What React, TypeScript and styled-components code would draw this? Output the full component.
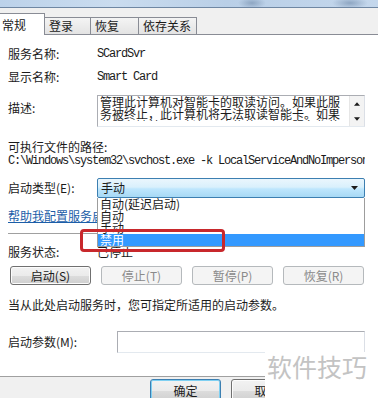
import React from 'react';
import styled, { createGlobalStyle } from 'styled-components';

const Global = createGlobalStyle`
  html, body { margin: 0; padding: 0; }
  body {
    width: 378px; height: 398px; overflow: hidden;
    background: #f0f0f0;
    font-family: "Noto Sans CJK SC", "Noto Sans", sans-serif;
    font-size: 12px; color: #1b1b1b;
  }
`;

const Dialog = styled.div`
  position: relative;
  width: 378px; height: 398px; overflow: hidden;
  display: flex; flex-direction: column;
  background: #f0f0f0;
`;

const TitleStrip = styled.div`
  height: 7px; flex: none;
  background:
    radial-gradient(ellipse 14px 6px at 252px 3px, #8ea6c2 0%, rgba(142,166,194,0) 100%),
    radial-gradient(ellipse 18px 6px at 350px 3px, #8ea6c2 0%, rgba(142,166,194,0) 100%),
    linear-gradient(90deg, #bcd2ea 0%, #cadcef 30%, #b9cfe7 60%, #c4d7ec 100%);
  border-bottom: 1px solid #6f87a3;
`;

const TabBar = styled.div`
  height: 26px; flex: none;
  display: flex; align-items: flex-end;
  border-bottom: 1px solid #898c95;
`;

const Tab = styled.div<{ $active?: boolean; $w: number }>`
  box-sizing: border-box;
  width: ${p => p.$w}px;
  height: ${p => (p.$active ? 22 : 17)}px;
  margin-left: ${p => (p.$active ? -2 : 0)}px;
  margin-bottom: ${p => (p.$active ? -1 : 0)}px;
  background: ${p => (p.$active ? '#ffffff' : 'linear-gradient(#f4f4f4, #e3e3e3)')};
  border-top: 1px solid #898c95;
  border-right: 1px solid #898c95;
  border-left: ${p => (p.$active ? '1px solid #898c95' : 'none')};
  padding: ${p => (p.$active ? '4px 0 0 3px' : '1px 0 0 4px')};
  line-height: 14px;
  font-size: 12px;
  color: #1b1b1b;
  position: relative;
  z-index: ${p => (p.$active ? 1 : 0)};
`;

const Panel = styled.div`
  position: relative;
  flex: none;
  height: 341px;
  background: #ffffff;
  border-bottom: 1px solid #a0a0a0;
  display: flex; flex-direction: column;
`;

const Row = styled.div<{ $mt: number; $label?: number; $h?: number }>`
  display: grid;
  grid-template-columns: ${p => p.$label ?? 89}px 1fr;
  align-items: center;
  margin-top: ${p => p.$mt}px;
  padding: 0 13px 0 8px;
  height: ${p => p.$h ?? 16}px;
`;

const Label = styled.div<{ $top?: number }>`
  line-height: 16px;
  white-space: nowrap;
  align-self: ${p => (p.$top !== undefined ? 'start' : 'center')};
  margin-top: ${p => p.$top ?? 0}px;
`;

const Mono = styled.div`
  font-family: "Liberation Mono", "DejaVu Sans Mono", monospace;
  font-size: 12px;
  letter-spacing: -1.2px;
  line-height: 14px;
  white-space: nowrap;
`;

const TextLine = styled.div<{ $mt: number }>`
  margin-top: ${p => p.$mt}px;
  padding: 0 13px 0 8px;
  line-height: 16px;
  white-space: nowrap;
`;

const PathLine = styled(Mono)`
  margin: -1px 13px 0 8px;
  overflow: hidden;
`;

const DescBox = styled.div`
  box-sizing: border-box;
  height: 32px;
  border: 1px solid #abadb3;
  border-right-color: #dbdfe6;
  border-bottom-color: #e3e9ef;
  display: flex;
`;

const DescText = styled.div`
  flex: 1;
  height: 25px;
  padding: 0 0 0 2px;
  line-height: 12px;
  overflow: hidden;
  word-break: break-all;
`;

const ScrollBar = styled.div`
  width: 14px;
  background: #f3f3f3;
  border-left: 1px solid #e6e6e6;
  display: flex; flex-direction: column; align-items: center; justify-content: space-between;
  padding: 6px 0 5px;
`;

const ComboWrap = styled.div`
  position: relative;
  height: 20px;
`;

const Combo = styled.div`
  box-sizing: border-box;
  height: 20px;
  border: 1px solid #3c7fb1;
  border-radius: 2px;
  background: linear-gradient(#eaf6fd 0%, #d9f0fc 45%, #bee6fd 55%, #a7d9f5 100%);
  display: flex; align-items: center; justify-content: space-between;
  padding: 0 6px 0 3px;
  line-height: 16px;
`;

const DropList = styled.div`
  position: absolute;
  left: 0; top: 100%;
  box-sizing: border-box;
  width: 268px;
  height: 49px;
  background: #ffffff;
  border: 1px solid #9d9d9d;
  border-top: none;
  z-index: 2;
`;

const Item = styled.div<{ $sel?: boolean }>`
  height: 12px;
  line-height: 12px;
  padding-left: 2px;
  background: ${p => (p.$sel ? '#3399ff' : 'transparent')};
  color: ${p => (p.$sel ? '#ffffff' : '#1b1b1b')};
  white-space: nowrap;
`;

const Link = styled.a`
  color: #1c5ea8;
  text-decoration: underline;
`;

const Separator = styled.div<{ $mt: number }>`
  margin: ${p => p.$mt}px 13px 0 8px;
  height: 1px;
  background: #a0a0a0;
`;

const ButtonRow = styled.div<{ $mt: number }>`
  margin-top: ${p => p.$mt}px;
  padding: 0 14px 0 10px;
  display: flex;
  justify-content: space-between;
`;

const Button = styled.div<{ $disabled?: boolean; $w?: number; $default?: boolean }>`
  box-sizing: border-box;
  width: ${p => p.$w ?? 81}px;
  height: ${p => (p.$default !== undefined ? 23 : 19)}px;
  border: 1px solid ${p => (p.$disabled ? '#b5b9bc' : p.$default ? '#3c7fb1' : '#707070')};
  border-radius: 3px;
  background: ${p => (p.$disabled ? '#f4f4f4' : 'linear-gradient(#f2f2f2 0%, #ebebeb 50%, #dddddd 51%, #cfcfcf 100%)')};
  box-shadow: ${p => (p.$default ? 'inset 0 0 0 1px #7fd0f2' : p.$disabled ? 'none' : 'inset 0 0 0 1px #fcfcfc')};
  color: ${p => (p.$disabled ? '#8a8a8a' : '#1b1b1b')};
  display: flex; align-items: center; justify-content: center;
  line-height: 14px;
  white-space: nowrap;
`;

const InputBox = styled.div`
  box-sizing: border-box;
  height: 22px;
  border: 1px solid #abadb3;
  border-right-color: #dbdfe6;
  border-bottom-color: #e3e9ef;
  background: #fff;
`;

const Highlight = styled.div`
  position: absolute;
  left: 80px; top: 194px;
  width: 145px; height: 23px;
  box-sizing: border-box;
  border: 3px solid #c8282c;
  border-radius: 4px;
  z-index: 3;
`;

const Footer = styled.div`
  flex: 1;
  display: flex;
  gap: 10px;
  padding: 2px 0 0 150px;
`;

const Watermark = styled.div`
  position: absolute;
  right: 0; bottom: 0;
  width: 113px; height: 46px;
  background: #ffffff;
  box-sizing: border-box;
  padding: 2px 0 0 2px;
  font-size: 25px;
  line-height: 25px;
  color: #c3c3c3;
  white-space: nowrap;
  z-index: 4;
`;

const Arrow = ({ up, size = 7 }: { up?: boolean; size?: number }) => (
  <svg width={size} height={4} viewBox="0 0 7 4">
    <polygon points={up ? '0,4 3.5,0 7,4' : '0,0 7,0 3.5,4'} fill="#1b1b1b" />
  </svg>
);

export default function App() {
  return (
    <>
      <Global />
      <Dialog>
        <TitleStrip />
        <TabBar>
          <Tab $active $w={47}>常规</Tab>
          <Tab $w={46}>登录</Tab>
          <Tab $w={48}>恢复</Tab>
          <Tab $w={58}>依存关系</Tab>
        </TabBar>
        <Panel>
          <Row $mt={11}>
            <Label>服务名称:</Label>
            <Mono>SCardSvr</Mono>
          </Row>
          <Row $mt={7}>
            <Label>显示名称:</Label>
            <Mono>Smart Card</Mono>
          </Row>
          <Row $mt={10} $h={32}>
            <Label $top={5}>描述:</Label>
            <DescBox>
              <DescText>
                管理此计算机对智能卡的取读访问。如果此服务被终止，此计算机将无法取读智能卡。如果此服务被禁用，任何明确依赖于它的服务都将无法启动。
              </DescText>
              <ScrollBar>
                <Arrow up size={6} />
                <Arrow size={6} />
              </ScrollBar>
            </DescBox>
          </Row>
          <TextLine $mt={12}>可执行文件的路径:</TextLine>
          <PathLine>C:\Windows\system32\svchost.exe -k LocalServiceAndNoImpersonation</PathLine>
          <Row $mt={10} $h={20}>
            <Label>启动类型(E):</Label>
            <ComboWrap>
              <Combo>
                <span>手动</span>
                <Arrow />
              </Combo>
              <DropList>
                <Item>自动(延迟启动)</Item>
                <Item>自动</Item>
                <Item>手动</Item>
                <Item $sel>禁用</Item>
              </DropList>
            </ComboWrap>
          </Row>
          <TextLine $mt={10}>
            <Link>帮助我配置服务启动选项。</Link>
          </TextLine>
          <Separator $mt={9} />
          <Row $mt={10} $h={14}>
            <Label>服务状态:</Label>
            <Label>已停止</Label>
          </Row>
          <ButtonRow $mt={8}>
            <Button>启动(S)</Button>
            <Button $disabled>停止(T)</Button>
            <Button $disabled>暂停(P)</Button>
            <Button $disabled>恢复(R)</Button>
          </ButtonRow>
          <TextLine $mt={12}>当从此处启动服务时，您可指定所适用的启动参数。</TextLine>
          <Row $mt={18} $h={22} $label={109}>
            <Label>启动参数(M):</Label>
            <InputBox />
          </Row>
          <Highlight />
        </Panel>
        <Footer>
          <Button $w={71} $default>确定</Button>
          <Button $w={71} $default={false}>取消</Button>
        </Footer>
        <Watermark>软件技巧</Watermark>
      </Dialog>
    </>
  );
}
